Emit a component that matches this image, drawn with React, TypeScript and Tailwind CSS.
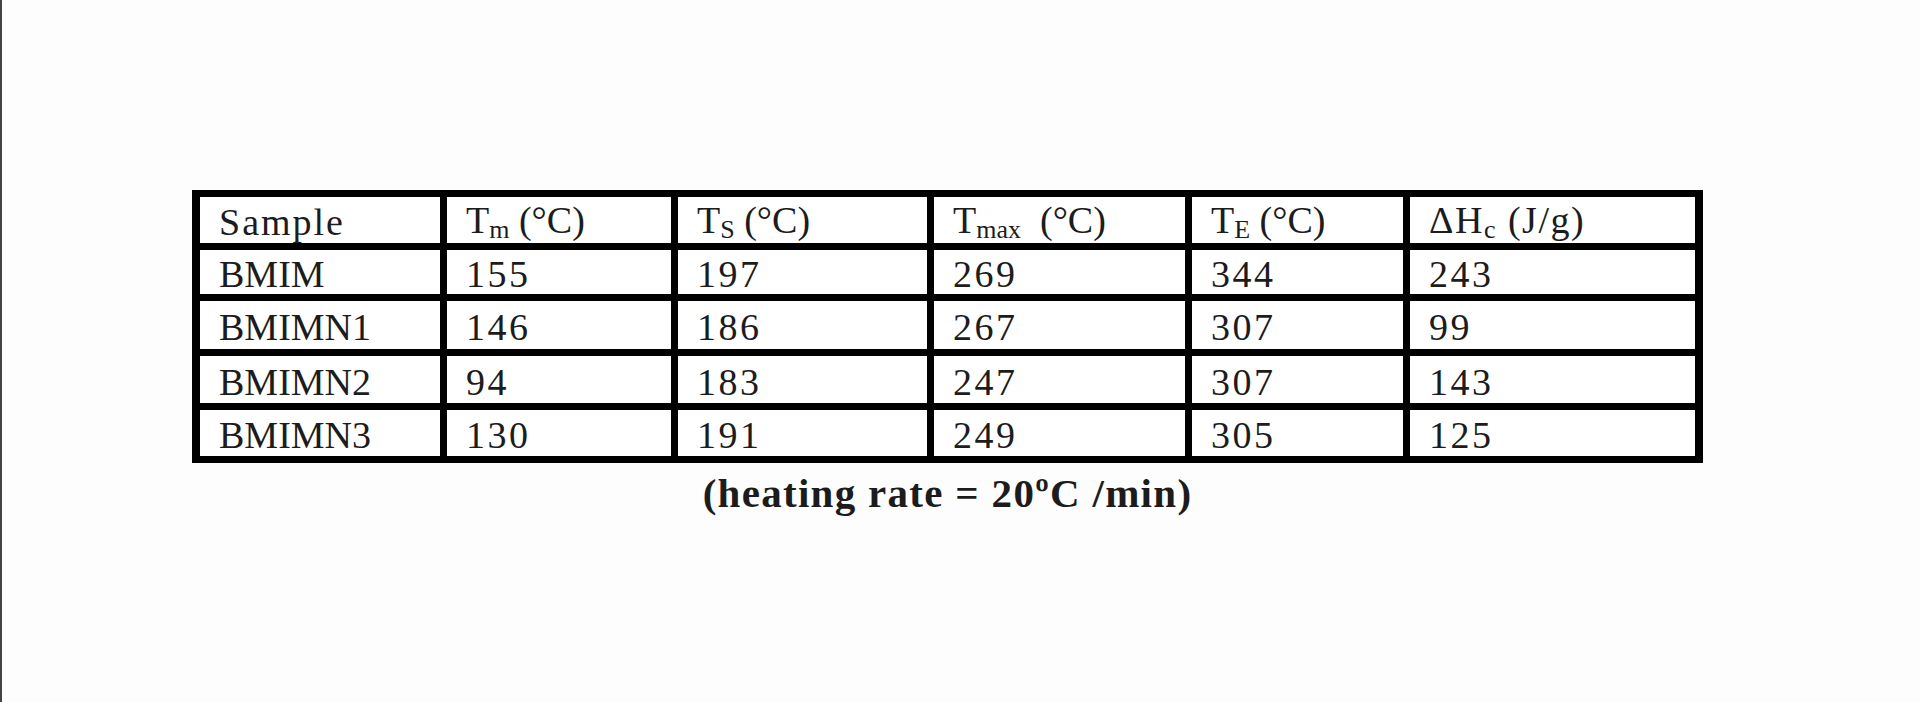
import React from "react";

const serif = { fontFamily: '"Liberation Serif", "Times New Roman", serif' };

type Cell = React.ReactNode;

const Sub = ({ children }: { children: React.ReactNode }) => (
  <span className="text-[26px] align-[-5px]">{children}</span>
);

const header: Cell[] = [
  <span className="tracking-[2px]">Sample</span>,
  <>T<Sub>m</Sub> (°C)</>,
  <>T<Sub>S</Sub> (°C)</>,
  <>T<Sub>max</Sub>&nbsp; (°C)</>,
  <>T<Sub>E</Sub> (°C)</>,
  <span className="tracking-[1.5px]">ΔH<Sub>c</Sub> (J/g)</span>,
];

const rows: string[][] = [
  ["BMIM", "155", "197", "269", "344", "243"],
  ["BMIMN1", "146", "186", "267", "307", "99"],
  ["BMIMN2", "94", "183", "247", "307", "143"],
  ["BMIMN3", "130", "191", "249", "305", "125"],
];

export default function App() {
  return (
    <div className="w-full h-[702px] bg-[#fdfdfd] border-l-2 border-[#444444] overflow-hidden" style={serif}>
      <div className="pt-[190px] pl-[190px] flex flex-col items-start">
        <div className="flex flex-col items-center">
          <div className="bg-black px-[8px] py-[7px] grid grid-cols-[240px_224px_249px_251px_211px_285px] grid-rows-[46px_44px_48px_47px_46px] gap-[7px]">
            {header.map((c, ci) => (
              <div
                key={`h-${ci}`}
                className="bg-white flex items-center pl-[19px] pt-[4px] text-[38px] leading-none text-[#1c1c1c] whitespace-nowrap"
              >
                <span>{c}</span>
              </div>
            ))}
            {rows.map((r, ri) =>
              r.map((c, ci) => (
                <div
                  key={`${ri}-${ci}`}
                  className="bg-white flex items-center pl-[19px] pt-[4px] text-[38px] leading-none text-[#1c1c1c] whitespace-nowrap"
                >
                  <span className={ci === 0 ? "" : "tracking-[2.5px]"}>{c}</span>
                </div>
              ))
            )}
          </div>
          <div className="mt-[10px] text-[41px] leading-none font-bold tracking-[1.3px] text-[#1c1c1c] whitespace-nowrap">
            (heating rate = 20ºC /min)
          </div>
        </div>
      </div>
    </div>
  );
}
